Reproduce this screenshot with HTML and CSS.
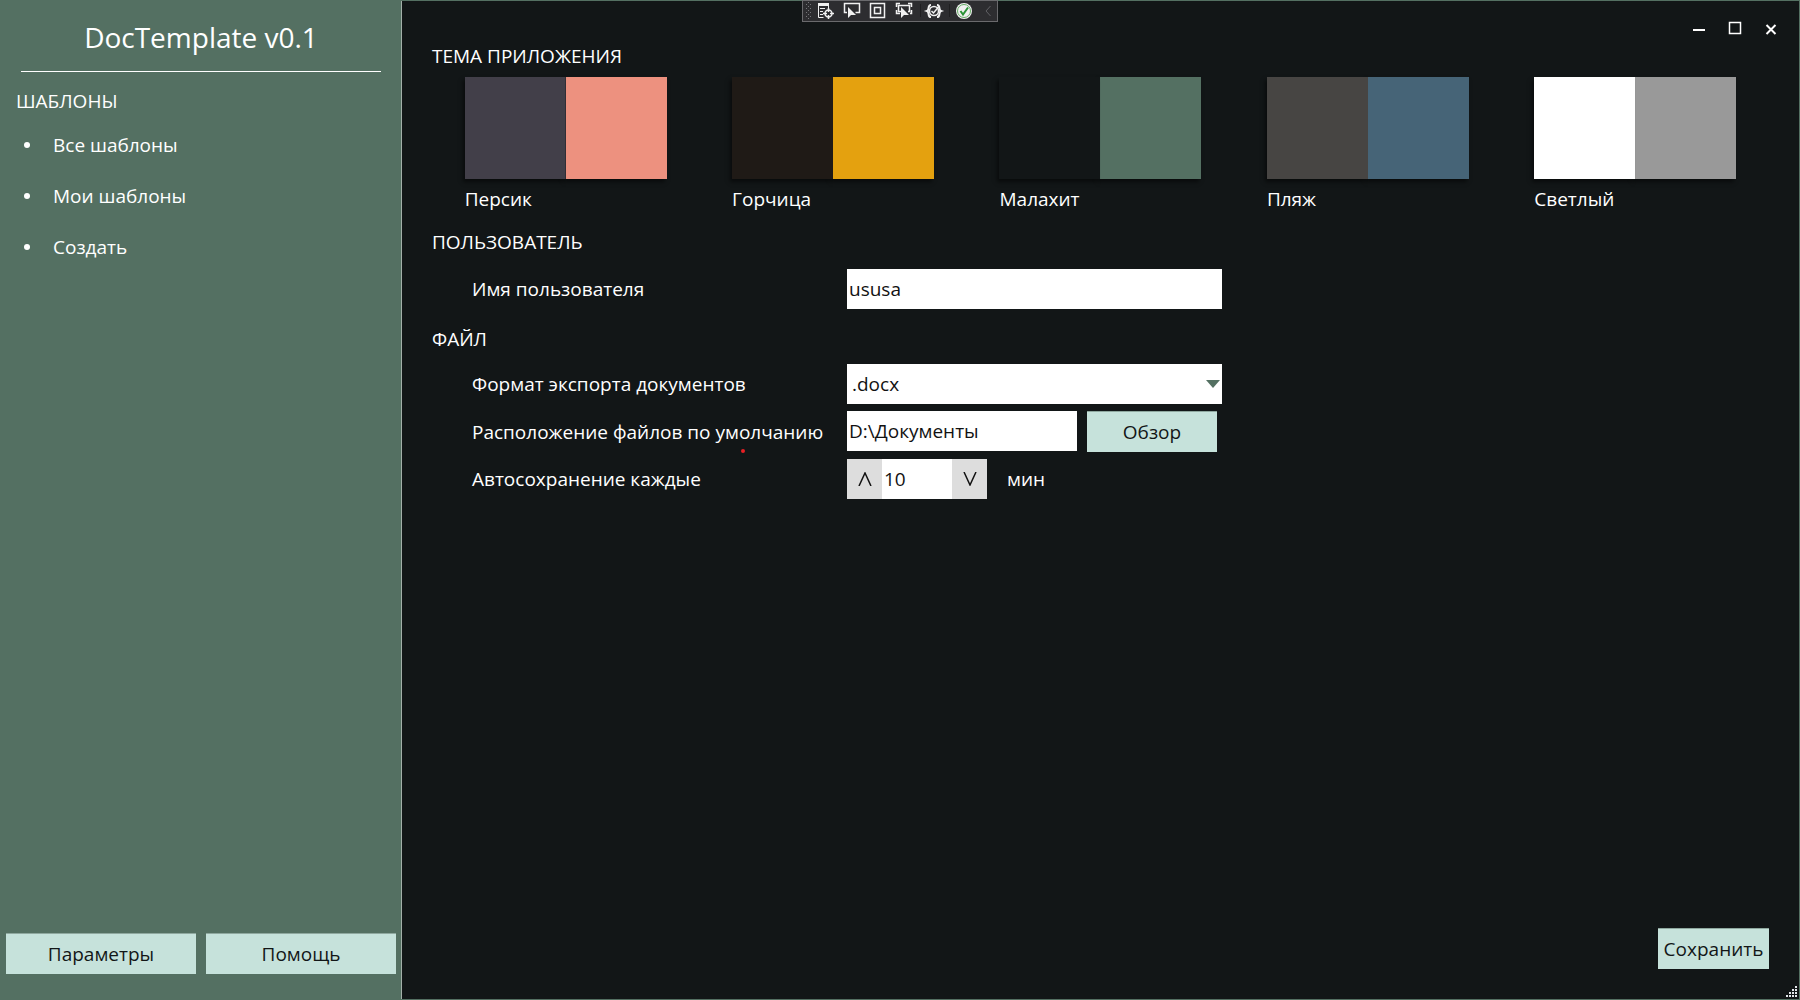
FILE: index.html
```html
<!DOCTYPE html>
<html lang="ru">
<head>
<meta charset="utf-8">
<meta name="viewport" content="width=device-width, initial-scale=1">
<title>DocTemplate v0.1</title>
<link rel="stylesheet" href="styles.css">
</head>
<body>
<div class="app">
  <aside class="sidebar">
    <h1 class="brand">DocTemplate v0.1</h1>
    <h2 class="heading nav-heading">ШАБЛОНЫ</h2>
    <nav>
      <ul class="nav-list">
        <li><a href="#all">Все шаблоны</a></li>
        <li><a href="#mine">Мои шаблоны</a></li>
        <li><a href="#create">Создать</a></li>
      </ul>
    </nav>
    <div class="sidebar-actions">
      <button class="btn" type="button">Параметры</button>
      <button class="btn" type="button">Помощь</button>
    </div>
  </aside>

  <main class="content">
    <div class="window-controls">
      <button type="button" aria-label="Свернуть"><svg width="12" height="14" viewBox="0 0 12 14"><path d="M0 9h12" stroke-width="2"/></svg></button>
      <button type="button" aria-label="Развернуть"><svg width="14" height="14" viewBox="0 0 14 14"><path d="M1.5 1.5h11v11h-11z" stroke-width="1.5"/></svg></button>
      <button type="button" aria-label="Закрыть"><svg width="12" height="14" viewBox="0 0 12 14"><path d="M1.5 4l9 9M10.5 4l-9 9" stroke-width="2"/></svg></button>
    </div>

    <form class="settings">
      <section>
        <h2 class="heading">ТЕМА ПРИЛОЖЕНИЯ</h2>
        <div class="themes">
          <button class="theme peach" type="button"><span class="swatch"><i></i><i></i></span>Персик</button>
          <button class="theme mustard" type="button"><span class="swatch"><i></i><i></i></span>Горчица</button>
          <button class="theme malachite" type="button"><span class="swatch"><i></i><i></i></span>Малахит</button>
          <button class="theme beach" type="button"><span class="swatch"><i></i><i></i></span>Пляж</button>
          <button class="theme light" type="button"><span class="swatch"><i></i><i></i></span>Светлый</button>
        </div>
      </section>

      <section class="user-section">
        <h2 class="heading">ПОЛЬЗОВАТЕЛЬ</h2>
        <div class="rows">
          <div class="row">
            <label for="user">Имя пользователя</label>
            <input class="field" id="user" type="text" value="ususa">
          </div>
        </div>
      </section>

      <section class="file-section">
        <h2 class="heading">ФАЙЛ</h2>
        <div class="rows">
          <div class="row">
            <label for="format">Формат экспорта документов</label>
            <div class="select">
              <select class="field" id="format"><option>.docx</option></select>
              <svg class="arrow" width="14" height="8" viewBox="0 0 14 8"><path d="M0 0h14L7 8z"/></svg>
            </div>
          </div>
          <div class="row">
            <label for="path">Расположение файлов по умолчанию</label>
            <div class="path">
              <input class="field" id="path" type="text" value="D:\Документы">
              <button class="btn" type="button">Обзор</button>
            </div>
            <span class="marker"></span>
          </div>
          <div class="row">
            <label for="autosave">Автосохранение каждые</label>
            <div class="spinner">
              <button type="button" aria-label="Больше"><svg width="14" height="14" viewBox="0 0 14 14"><path d="M1 14L7 1l6 13"/></svg></button>
              <input class="field" id="autosave" type="text" value="10">
              <button type="button" aria-label="Меньше"><svg width="14" height="14" viewBox="0 0 14 14"><path d="M1 0l6 13 6-13"/></svg></button>
              <span class="unit">мин</span>
            </div>
          </div>
        </div>
      </section>

      <button class="btn save" type="button">Сохранить</button>
    </form>
    <svg class="grip" width="12" height="12" viewBox="0 0 12 12"><path d="M9 0h2v2H9zM6 3h2v2H6zM9 3h2v2H9zM3 6h2v2H3zM6 6h2v2H6zM9 6h2v2H9zM0 9h2v2H0zM3 9h2v2H3zM6 9h2v2H6zM9 9h2v2H9z"/></svg>
  </main>

  <div class="debug-bar">
    <svg width="196" height="22" viewBox="0 0 196 22">
      <defs><pattern id="dots" width="4" height="4" patternUnits="userSpaceOnUse"><path d="M0 0h1v1H0zM2 2h1v1H2z" fill="#77777b"/></pattern></defs>
      <rect x="4" y="2" width="5" height="17" fill="url(#dots)"/>
      <g fill="none" stroke="#f1f1f1">
        <path d="M16 4.5h11" stroke-width="3"/>
        <path d="M16.5 4v13.500h5M18 8.500h5M18 11.500h3M18 14.500h3M26.500 6v3"/>
        <circle cx="26.500" cy="13.500" r="3.500" stroke-width="1.500"/>
        <path d="M26.500 8v4M26.500 15v4M21 13.500h4M28 13.500h4" stroke-width="1.500"/>
        <path d="M45 12.500h-2.500v-9h15v9h-4" stroke-width="1.500"/>
        <path d="M68.500 3.500h14v14h-14zM72.500 7.500h6v6h-6z" stroke-width="1.500"/>
        <path d="M94.500 7V3.500H98M106 3.500h3.500V7M109.500 10v3.500H108M94.500 10v3.500H98M100 5.500h7.500v6H106M99 11.500h-2.500v-6H100" stroke-width="1.500"/>
        <path d="M129 5c-4 0-1 5-4 6 3 1 0 6 4 6M135 5c4 0 1 5 4 6-3 1 0 6-4 6" stroke-width="2"/>
        <circle cx="132" cy="11" r="4.500" stroke-width="1.500"/>
        <path d="M129.500 11l2 2 5-6" stroke-width="1.500"/>
      </g>
      <path d="M46 7v11l3-3 5 0zM99 7v11l3-3 5 0z" fill="#f1f1f1"/>
      <path d="M118.500 4v13M147.500 4v13" stroke="#1f1f21"/>
      <circle cx="162" cy="11" r="8" fill="#f1f1f1"/>
      <circle cx="162" cy="11" r="6.500" fill="none" stroke="#66ad67"/>
      <path d="M158.500 11l2.500 3.500 5-7" fill="none" stroke="#2b9437" stroke-width="2"/>
      <path d="M188.500 6l-4.500 5 4.500 5" fill="none" stroke="#606064"/>
    </svg>
  </div>
</div>
</body>
</html>
```
FILE: styles.css
```css
:root {
  --accent: #547062;
  --dark: #121617;
  --pale: #c6e2db;
}

* { box-sizing: border-box; }

body {
  margin: 0;
  background: var(--dark);
  color: #fff;
  font-family: "Open Sans", "Noto Sans", sans-serif;
  font-size: 19px;
  line-height: 26px;
}

button, input, select { font: inherit; }

button {
  border: 0;
  padding: 0;
  background: none;
  color: inherit;
}

.app {
  position: relative;
  display: flex;
  min-height: 100vh;
  border: solid var(--accent);
  border-width: 1px 1px 1px 0;
}

/* Sidebar */
.sidebar {
  display: flex;
  flex-direction: column;
  flex: 0 0 402px;
  padding-bottom: 25px;
  border-right: 1px solid #a3b0a9;
  background: var(--accent);
}

.brand {
  margin: 0 20px 0 21px;
  padding: 17px 0 15px;
  border-bottom: 1px solid #fff;
  font-size: 28px;
  font-weight: 400;
  line-height: 38px;
  text-align: center;
}

.heading {
  margin: 0;
  font-size: 19px;
  font-weight: 400;
  line-height: 26px;
}

.nav-heading { padding: 16px 16px 0; }

.nav-list {
  display: flex;
  flex-direction: column;
  gap: 25px;
  margin: 0;
  padding: 18px 16px 0 24px;
  list-style: none;
}

.nav-list li {
  display: flex;
  align-items: center;
  gap: 23px;
}

.nav-list li::before {
  content: "";
  width: 6px;
  height: 6px;
  border-radius: 50%;
  background: #fff;
}

.nav-list a {
  color: inherit;
  text-decoration: none;
}

.sidebar-actions {
  display: grid;
  grid-template-columns: 1fr 1fr;
  gap: 10px;
  margin-top: auto;
  padding: 0 5px 0 6px;
}

.btn {
  height: 41px;
  border-top: 1px solid #8fa89f;
  background: var(--pale);
  color: var(--dark);
}

/* Main area */
.content {
  position: relative;
  display: flex;
  flex: 1;
  min-width: 0;
}

.settings {
  display: flex;
  flex-direction: column;
  flex: 1;
  padding: 42px 30px 30px;
}

.themes {
  display: grid;
  grid-template-columns: repeat(5, 1fr);
  justify-items: center;
  padding-top: 8px;
}

.theme {
  display: flex;
  flex-direction: column;
  gap: 7px;
  width: 202px;
  text-align: left;
}

.swatch {
  display: flex;
  height: 102px;
}

.swatch i {
  flex: 1;
  box-shadow: -2px 3px 4px rgba(0, 0, 0, 0.5);
}

.swatch i:first-child {
  position: relative;
  z-index: 1;
  clip-path: inset(-10px 0 -10px -10px);
}

.peach i { background: #423f49; }
.peach i + i { background: #ed917f; }
.mustard i { background: #1f1a16; }
.mustard i + i { background: #e4a10f; }
.malachite i { background: #121617; }
.malachite i + i { background: #547062; }
.beach i { background: #474543; }
.beach i + i { background: #466477; }
.light i { background: #fff; }
.light i + i { background: #999; }

.user-section,
.file-section { padding-top: 17px; }

.rows {
  display: flex;
  flex-direction: column;
  gap: 7px;
  padding: 14px 0 0 40px;
}

.file-section .rows { padding-top: 12px; }

.row {
  position: relative;
  display: grid;
  grid-template-columns: 375px 375px;
  align-items: center;
  min-height: 40px;
}

.field {
  width: 100%;
  height: 40px;
  border: 0;
  border-radius: 0;
  padding: 0 2px;
  background: #fff;
  color: #121212;
}

.select {
  position: relative;
  display: flex;
}

.select .field {
  appearance: none;
  padding-left: 5px;
}

.arrow {
  position: absolute;
  top: 16px;
  right: 2px;
  fill: var(--accent);
  pointer-events: none;
}

.path {
  display: grid;
  grid-template-columns: 230px 130px;
  gap: 10px;
}

.spinner {
  display: grid;
  grid-template-columns: 35px 70px 35px auto;
  align-items: center;
}

.spinner button {
  display: grid;
  place-items: center;
  height: 40px;
  background: #ddd;
}

.spinner svg {
  fill: none;
  stroke: #121212;
  stroke-width: 1.5;
}

.unit { padding-left: 20px; }

.marker {
  position: absolute;
  left: 269px;
  top: 38px;
  width: 4px;
  height: 4px;
  border-radius: 50%;
  background: #e81f24;
}

.save {
  width: 111px;
  margin-top: auto;
  align-self: flex-end;
}

/* Window chrome */
.window-controls {
  position: absolute;
  top: 20px;
  right: 22px;
  display: flex;
  gap: 23px;
}

.window-controls button {
  display: flex;
}

.window-controls svg {
  fill: none;
  stroke: #fff;
}

.grip {
  position: absolute;
  right: 1px;
  bottom: 1px;
  fill: #e4e6ea;
}

.debug-bar {
  position: absolute;
  top: -1px;
  left: 802px;
  display: flex;
  height: 22px;
  border: 1px solid #6a6a6d;
  background: #2d2d30;
}

.debug-bar svg { margin: -1px; }
```
